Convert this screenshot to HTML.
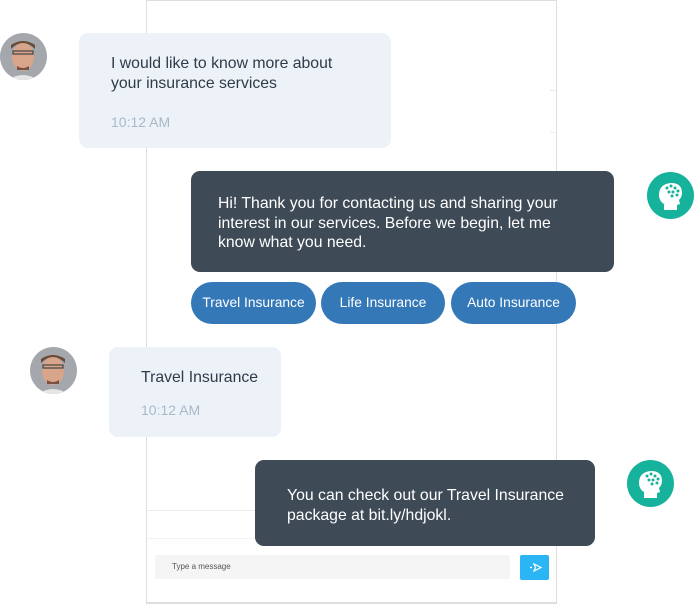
<!DOCTYPE html>
<html><head><style>
body{margin:0;width:694px;height:604px;background:#fff;position:relative;overflow:hidden;font-family:"Liberation Sans",sans-serif;}
.a{position:absolute}
.frame{left:146px;top:0;width:411px;height:604px;border:1.5px solid #dedede;border-bottom:2px solid #dedede;box-sizing:border-box}
.light{background:#edf2f9;border-radius:9px;color:#2f3b47}
.dark{background:#3e4a55;border-radius:9px;color:#fff}
.t{font-size:15.8px;line-height:19.5px;white-space:nowrap}
.time{font-size:14px;color:#a9b8c8}
.btn{background:#3478b8;color:#fff;border-radius:21px;height:42px;top:282px;font-size:13.8px;line-height:42px;text-align:center}
</style></head><body>
<div class="a frame"></div>
<div class="a" style="left:147px;top:510px;width:408px;height:1px;background:#ececec"></div>
<div class="a" style="left:147px;top:538px;width:408px;height:1px;background:#f2f2f2"></div>
<div class="a" style="left:550px;top:90px;width:5px;height:1px;background:#e6e6e6"></div>
<div class="a" style="left:550px;top:132px;width:5px;height:1px;background:#eee"></div>
<div class="a" style="left:155px;top:555px;width:355px;height:24px;background:#f5f5f5;border-radius:2px;font-size:8px;color:#555;line-height:24px;padding-left:17px;box-sizing:border-box">Type a message</div>
<div class="a" style="left:520px;top:555px;width:29px;height:25px;background:#2bb5f4;border-radius:2px">
<svg width="29" height="25"><path d="M10 12.5h2M14 9l7 3.5-7 3.5 1.5-3.5z" fill="none" stroke="#fff" stroke-width="1.2"/></svg></div>

<svg class="a" style="left:0;top:33px" width="47" height="47"><defs><clipPath id="c1"><circle cx="23.5" cy="23.5" r="23.5"/></clipPath></defs><g clip-path="url(#c1)"><rect width="47" height="47" fill="#a4a8ad"/><ellipse cx="23" cy="24" rx="11" ry="14" fill="#d9a58a"/><path d="M11 16q12-12 24 0v-4q-12-8-24 0z" fill="#6a4a37"/><rect x="13" y="18" width="20" height="3" fill="none" stroke="#444" stroke-width="1.2"/><path d="M17 33q6 4 12 0v4h-12z" fill="#7a5040"/><path d="M8 47q15-10 30 0z" fill="#e6e6e6"/></g></svg>
<svg class="a" style="left:30px;top:347px" width="47" height="47"><defs><clipPath id="c2"><circle cx="23.5" cy="23.5" r="23.5"/></clipPath></defs><g clip-path="url(#c2)"><rect width="47" height="47" fill="#a4a8ad"/><ellipse cx="23" cy="24" rx="11" ry="14" fill="#d9a58a"/><path d="M11 16q12-12 24 0v-4q-12-8-24 0z" fill="#6a4a37"/><rect x="13" y="18" width="20" height="3" fill="none" stroke="#444" stroke-width="1.2"/><path d="M17 33q6 4 12 0v4h-12z" fill="#7a5040"/><path d="M8 47q15-10 30 0z" fill="#e6e6e6"/></g></svg>

<svg class="a" style="left:647px;top:172px" width="47" height="47"><circle cx="23.5" cy="23.5" r="23.5" fill="#17b29c"/><path d="M17 38v-6q-5-3-5-9q0-11 12-12q11 0 11 10q0 4-3 7l1 4-3 1v5z" fill="#fff"/><g fill="#17b29c"><circle cx="20" cy="16" r="1.5"/><circle cx="24" cy="14" r="1.5"/><circle cx="28" cy="16" r="1.5"/><circle cx="31" cy="19" r="1.5"/><circle cx="22" cy="20" r="1.5"/><circle cx="26" cy="20" r="1.5"/><circle cx="30" cy="23" r="1.5"/><circle cx="25" cy="24" r="1.5"/></g></svg>
<svg class="a" style="left:627px;top:460px" width="47" height="47"><circle cx="23.5" cy="23.5" r="23.5" fill="#17b29c"/><path d="M17 38v-6q-5-3-5-9q0-11 12-12q11 0 11 10q0 4-3 7l1 4-3 1v5z" fill="#fff"/><g fill="#17b29c"><circle cx="20" cy="16" r="1.5"/><circle cx="24" cy="14" r="1.5"/><circle cx="28" cy="16" r="1.5"/><circle cx="31" cy="19" r="1.5"/><circle cx="22" cy="20" r="1.5"/><circle cx="26" cy="20" r="1.5"/><circle cx="30" cy="23" r="1.5"/><circle cx="25" cy="24" r="1.5"/></g></svg>

<div class="a light" style="left:79px;top:33px;width:312px;height:115px">
<div class="a t" style="left:32px;top:21px">I would like to know more about<br>your insurance services</div>
<div class="a time" style="left:32px;top:81px">10:12 AM</div></div>

<div class="a dark" style="left:191px;top:171px;width:423px;height:101px">
<div class="a t" style="left:27px;top:23px">Hi! Thank you for contacting us and sharing your<br>interest in our services. Before we begin, let me<br>know what you need.</div></div>

<div class="a btn" style="left:191px;width:125px">Travel Insurance</div>
<div class="a btn" style="left:321px;width:124px">Life Insurance</div>
<div class="a btn" style="left:451px;width:125px">Auto Insurance</div>

<div class="a light" style="left:109px;top:347px;width:172px;height:90px">
<div class="a t" style="left:32px;top:21px">Travel Insurance</div>
<div class="a time" style="left:32px;top:55px">10:12 AM</div></div>

<div class="a dark" style="left:255px;top:460px;width:340px;height:86px">
<div class="a t" style="left:32px;top:26px">You can check out our Travel Insurance<br>package at bit.ly/hdjokl.</div></div>
</body></html>
